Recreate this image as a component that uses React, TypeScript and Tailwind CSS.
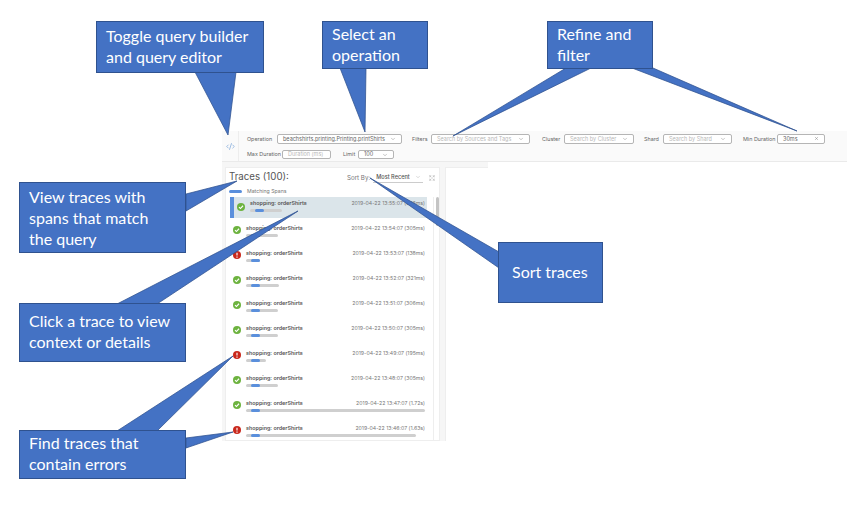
import { ChevronDown, CodeXml, Expand, X } from 'lucide-react';

const UI_FONT = "font-['Inter','Noto_Sans',sans-serif]";

interface Trace {
  time: string;
  ok: boolean;
  bar: string;
}

const TRACES: Trace[] = [
  { time: '2019-04-22 13:55:07 (266ms)', ok: true, bar: 'w-[32px]' },
  { time: '2019-04-22 13:54:07 (305ms)', ok: true, bar: 'w-[32px]' },
  { time: '2019-04-22 13:53:07 (138ms)', ok: false, bar: 'w-[14px]' },
  { time: '2019-04-22 13:52:07 (321ms)', ok: true, bar: 'w-[33px]' },
  { time: '2019-04-22 13:51:07 (306ms)', ok: true, bar: 'w-[32px]' },
  { time: '2019-04-22 13:50:07 (305ms)', ok: true, bar: 'w-[32px]' },
  { time: '2019-04-22 13:49:07 (195ms)', ok: false, bar: 'w-[20px]' },
  { time: '2019-04-22 13:48:07 (305ms)', ok: true, bar: 'w-[32px]' },
  { time: '2019-04-22 13:47:07 (1.72s)', ok: true, bar: 'w-[179px]' },
  { time: '2019-04-22 13:46:07 (1.63s)', ok: false, bar: 'w-[170px]' },
];

// tails of the callouts, tip last
const TAILS = [
  '195,72 236,72 228,135',
  '340,68 366,68 365,132',
  '566,68 591,68 453,136',
  '632,68 653,68 797,131',
  '186,194 186,211 237,181',
  '117,304 157,304 298,211',
  '117,431 157,431 233,356',
  '186,438 186,448 233,432',
  '499,252 499,268 370,178',
];

function StatusIcon({ ok }: { ok: boolean }) {
  return (
    <svg width="8" height="8" viewBox="0 0 14 14" className="shrink-0">
      <circle cx="7" cy="7" r="7" fill={ok ? '#6db33f' : '#c9281c'} />
      {ok ? (
        <path d="M3.5 7.2 6 9.7 10.5 4.8" fill="none" stroke="#fff" strokeWidth="2" />
      ) : (
        <path d="M7 3v5M7 9.6v2" fill="none" stroke="#fff" strokeWidth="2" />
      )}
    </svg>
  );
}

function TraceRow({ trace, selected }: { trace: Trace; selected?: boolean }) {
  return (
    <div className="h-[25px]">
      <div
        className={
          selected
            ? 'flex h-[21px] bg-[#dbe5ea] border-l-4 border-[#5a8fdc] pl-[3px] pr-[2px]'
            : 'flex h-[21px] pl-[3px] pr-[2px]'
        }
      >
        <div className={selected ? 'pt-[6px] pr-[5px]' : 'pt-[4px] pr-[5px]'}>
          <StatusIcon ok={trace.ok} />
        </div>
        <div className="flex-1 min-w-0 pt-[3px]">
          <div className="flex justify-between leading-[6px]">
            <span className="text-[5.4px] font-semibold text-[#555]">shopping: orderShirts</span>
            <span className="text-[5.2px] text-[#777]">{trace.time}</span>
          </div>
          <div className={`mt-[2.5px] h-[3px] rounded-full bg-[#cfcfcf] ${trace.bar}`}>
            <div className="ml-[5px] h-[3px] w-[9px] rounded-full bg-[#5a8fdc]" />
          </div>
        </div>
      </div>
    </div>
  );
}

function Select({ width, text, placeholder }: { width: string; text: string; placeholder?: boolean }) {
  return (
    <div
      className={`flex items-center justify-between h-[9.5px] px-[5px] bg-white border border-[#b5b5b5] rounded-[2px] text-[5.5px] ${width} ${
        placeholder ? 'text-[#b8b8b8]' : 'text-[#666]'
      }`}
    >
      <span className="whitespace-nowrap">{text}</span>
      <ChevronDown size={6} strokeWidth={1.5} className="text-[#666] shrink-0" />
    </div>
  );
}

function Label({ width, text }: { width: string; text: string }) {
  return <span className={`text-[5.4px] text-[#666] whitespace-nowrap ${width}`}>{text}</span>;
}

function QueryBar() {
  return (
    <div className="flex h-[31px] w-[625px] bg-[#fafafa] border-b border-[#eaeaea]">
      <div className="flex w-[17px] items-center justify-center border-r border-[#ededed]">
        <CodeXml size={9} strokeWidth={1.5} className="text-[#5a8fd0] mt-[1px]" />
      </div>
      <div className="pl-[8px] pt-[3px] flex-1">
        <div className="flex items-center h-[9.5px]">
          <Label width="w-[30px]" text="Operation" />
          <Select width="w-[125px]" text="beachshirts.printing.Printing.printShirts" />
          <Label width="ml-[10px] w-[19px]" text="Filters" />
          <Select width="w-[99px]" text="Search by Sources and Tags" placeholder />
          <Label width="ml-[12px] w-[22px]" text="Cluster" />
          <Select width="w-[70px]" text="Search by Cluster" placeholder />
          <Label width="ml-[10px] w-[19px]" text="Shard" />
          <Select width="w-[69px]" text="Search by Shard" placeholder />
          <Label width="ml-[11px] w-[34px]" text="Min Duration" />
          <div className="flex items-center justify-between h-[9.5px] w-[48px] px-[5px] bg-white border border-[#b5b5b5] rounded-[2px] text-[5.5px] text-[#666]">
            <span>30ms</span>
            <X size={5} className="text-[#777]" />
          </div>
        </div>
        <div className="flex items-center h-[10px] mt-[6px]">
          <Label width="w-[35px]" text="Max Duration" />
          <div className="flex items-center h-[9.5px] w-[49px] px-[5px] bg-white border border-[#b5b5b5] rounded-[2px] text-[5.5px] text-[#b8b8b8] whitespace-nowrap">
            Duration (ms)
          </div>
          <Label width="ml-[12px] w-[15px]" text="Limit" />
          <Select width="w-[36px]" text="100" />
        </div>
      </div>
    </div>
  );
}

function TracesPanel() {
  return (
    <div className="w-[215px] h-[274px] bg-white border border-[#eeeeee] overflow-hidden">
      <div className="flex h-[19px] items-center pl-[3px] pr-[4px]">
        <span className="w-[59px] text-[9.7px] text-[#555] whitespace-nowrap">Traces (100):</span>
        <span className="ml-[59px] text-[6.2px] text-[#777] whitespace-nowrap">Sort By:</span>
        <div className="ml-[3px] flex h-[10px] w-[50px] items-center justify-between border-b border-[#cccccc] pl-[3px] pr-[2px] text-[5.6px] font-medium text-[#555]">
          <span className="whitespace-nowrap">Most Recent</span>
          <ChevronDown size={6} strokeWidth={1.2} className="text-[#888]" />
        </div>
        <Expand size={6} strokeWidth={1.2} className="ml-auto text-[#777]" />
      </div>
      <div className="flex h-[9px] items-center gap-[5px] pl-[3px]">
        <div className="h-[3px] w-[13px] rounded-full bg-[#5a8fdc]" />
        <span className="text-[5.2px] text-[#777]">Matching Spans</span>
      </div>
      <div className="flex mt-[1px]">
        <div className="w-[208px] pl-[4px] pr-[6px] border-r border-[#eeeeee]">
          <TraceRow trace={TRACES[0]} selected />
          {TRACES.slice(1).map((t) => (
            <TraceRow key={t.time} trace={t} />
          ))}
        </div>
        <div className="flex-1 pl-[2px]">
          <div className="h-[29px] w-[3px] rounded-full bg-[#c4c4c4]" />
        </div>
      </div>
    </div>
  );
}

function Callout({ box, lines }: { box: string; lines: string[] }) {
  return (
    <div
      className={`absolute bg-[#4472c4] border border-[#2f528f] text-white text-[16px] leading-[21px] whitespace-nowrap font-['Lato','Carlito',sans-serif] ${box}`}
    >
      {lines.map((l) => (
        <div key={l}>{l}</div>
      ))}
    </div>
  );
}

export default function App() {
  return (
    <div className={`relative w-[862px] h-[505px] bg-white overflow-hidden ${UI_FONT}`}>
      <div className="pl-[222px] pt-[131px]">
        <QueryBar />
        <div className="flex w-[266px] h-[279px] pl-[3px] pt-[5px] bg-[#f6f6f6]">
          <TracesPanel />
          <div className="ml-[5px] flex-1 bg-white border-l border-t border-[#eeeeee]" />
        </div>
      </div>

      <svg className="absolute inset-0" width="862" height="505">
        {TAILS.map((p) => (
          <polygon key={p} points={p} fill="#4472c4" stroke="#2f528f" strokeWidth="0.75" />
        ))}
      </svg>

      <Callout box="left-[96px] top-[21px] w-[168px] h-[52px] pl-[9px] pt-[3px]" lines={['Toggle query builder', 'and query editor']} />
      <Callout box="left-[322px] top-[21px] w-[106px] h-[48px] pl-[9px] pt-[1px]" lines={['Select an', 'operation']} />
      <Callout box="left-[547px] top-[21px] w-[106px] h-[48px] pl-[9px] pt-[1px]" lines={['Refine and', 'filter']} />
      <Callout box="left-[19px] top-[182px] w-[167px] h-[71px] pl-[9px] pt-[3px]" lines={['View traces with', 'spans that match', 'the query']} />
      <Callout box="left-[19px] top-[303px] w-[167px] h-[59px] pl-[9px] pt-[6px]" lines={['Click a trace to view', 'context or details']} />
      <Callout box="left-[19px] top-[430px] w-[167px] h-[49px] pl-[9px] pt-[1px]" lines={['Find traces that', 'contain errors']} />
      <Callout box="left-[498px] top-[242px] w-[105px] h-[61px] pl-[13px] pt-[18px]" lines={['Sort traces']} />
    </div>
  );
}
